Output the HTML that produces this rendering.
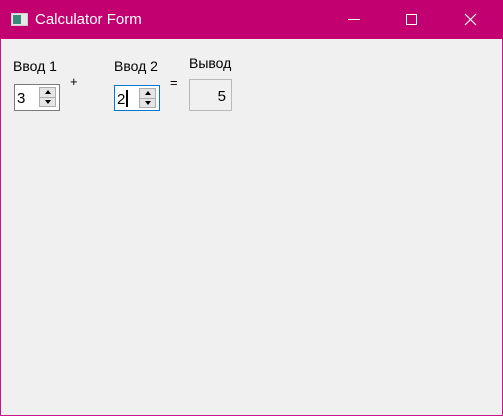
<!DOCTYPE html>
<html><head><meta charset="utf-8"><style>
*{margin:0;padding:0;box-sizing:border-box}
body{width:503px;height:416px;background:#f0f0f0;font-family:"Liberation Sans","DejaVu Sans",sans-serif;position:relative;overflow:hidden}
.frame{position:absolute;left:0;top:0;width:503px;height:416px;border:1px solid #c8158a}
.tb{position:absolute;left:0;top:0;width:503px;height:39px;background:#c20070}
.t{position:absolute;color:#fff;font-size:15px}
.lab{position:absolute;font-size:14px;color:#000}
.spin{position:absolute;background:#fff;border:1px solid #7a7a7a}
.spin .v{position:absolute;left:2px;top:5px;font-size:15px}
.arr{position:absolute;right:3px;top:2px;width:17px;height:20px;border:1px solid #adadad;background:#e5e5e5}
.arr div{height:9px;position:relative}
.arr div+div{border-top:1px solid #adadad}
.up:after{content:"";position:absolute;left:5px;top:2px;border-left:3px solid transparent;border-right:3px solid transparent;border-bottom:4px solid #000}
.dn:after{content:"";position:absolute;left:5px;top:2px;border-left:3px solid transparent;border-right:3px solid transparent;border-top:4px solid #000}
</style></head><body>
<div class="frame"></div>
<div class="tb">
 <div style="position:absolute;left:11px;top:13px;width:17px;height:13px;background:#e8e8e8;border:1px solid #ccc">
  <div style="position:absolute;left:1px;top:1px;width:8px;height:9px;background:#3a8a7a"></div>
 </div>
 <div class="t" style="left:35px;top:11px">Calculator Form</div>
 <div style="position:absolute;left:348px;top:19px;width:12px;height:1px;background:#fff"></div>
 <div style="position:absolute;left:406px;top:14px;width:11px;height:11px;border:1px solid #fff"></div>
 <svg style="position:absolute;left:464px;top:13px" width="13" height="13"><path d="M1 1L12 12M12 1L1 12" stroke="#fff" stroke-width="1.2"/></svg>
</div>
<div class="lab" style="left:13px;top:58px">Ввод 1</div>
<div class="lab" style="left:114px;top:58px">Ввод 2</div>
<div class="lab" style="left:189px;top:55px">Вывод</div>
<div class="lab" style="left:70px;top:74px;font-size:13px">+</div>
<div class="lab" style="left:170px;top:75px;font-size:13px">=</div>
<div class="spin" style="left:14px;top:84px;width:46px;height:27px"><span class="v">3</span><div class="arr"><div class="up"></div><div class="dn"></div></div></div>
<div class="spin" style="left:114px;top:85px;width:46px;height:26px;border-color:#0078d7"><span class="v">2</span><div style="position:absolute;left:11px;top:4px;width:2px;height:17px;background:#000"></div><div class="arr"><div class="up"></div><div class="dn"></div></div></div>
<div style="position:absolute;left:189px;top:79px;width:43px;height:32px;border:1px solid #b9b9b9;background:#f0f0f0"><span style="position:absolute;right:5px;top:8px;font-size:15px">5</span></div>
</body></html>
